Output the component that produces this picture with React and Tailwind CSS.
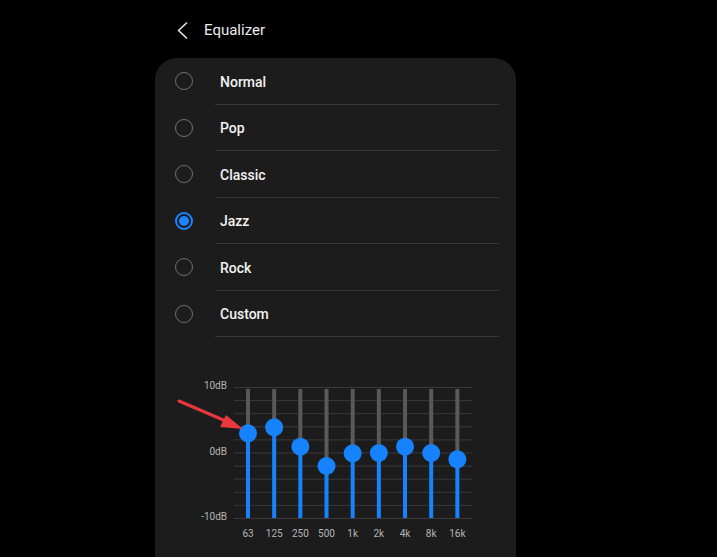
const presets = ['Normal', 'Pop', 'Classic', 'Jazz', 'Rock', 'Custom'];
const selected = 'Jazz';

// knob position as y offset inside the chart svg
const bands = [
  { label: '63', y: 53.3 },
  { label: '125', y: 47.3 },
  { label: '250', y: 66.7 },
  { label: '500', y: 86 },
  { label: '1k', y: 73.3 },
  { label: '2k', y: 73 },
  { label: '4k', y: 66.7 },
  { label: '8k', y: 73 },
  { label: '16k', y: 79.3 },
];

const font = { fontFamily: 'Roboto, "Noto Sans", sans-serif' };

const Radio = ({ on }) =>
  on ? (
    <div className="w-[18px] h-[18px] rounded-full border-2 border-[#1a84ff] flex items-center justify-center">
      <div className="w-[10px] h-[10px] rounded-full bg-[#1a84ff]" />
    </div>
  ) : (
    <div className="w-[18px] h-[18px] rounded-full border-[1.5px] border-[#707070]" />
  );

const Chart = () => {
  const top = 7;
  const step = 13.1;
  return (
    <svg width="238" height="145" viewBox="0 0 238 145">
      {/* grid */}
      {Array.from({ length: 11 }).map((_, i) => (
        <line
          key={i}
          x1="0"
          x2="238"
          y1={top + i * step + 0.5}
          y2={top + i * step + 0.5}
          stroke="#393939"
          strokeWidth="1"
        />
      ))}
      {/* sliders */}
      {bands.map((b, i) => {
        const x = 14 + i * 26.17;
        return (
          <g key={b.label}>
            <rect x={x - 2} y="9" width="4" height={b.y - 9} fill="#595959" />
            <rect x={x - 2} y={b.y} width="4" height={138 - b.y} fill="#1683fd" />
            <circle cx={x} cy={b.y} r="9" fill="#1683fd" />
          </g>
        );
      })}
    </svg>
  );
};

const App = () => {
  return (
    <div className="relative w-[717px] h-[557px] bg-black overflow-hidden text-white" style={font}>
      {/* Header */}
      <div className="h-[58px] flex items-center pl-[177px] pt-[3px]">
        <svg width="11" height="17" viewBox="0 0 11 17" fill="none">
          <polyline points="9.5,1 1.5,8.5 9.5,16" stroke="#e6e6e6" strokeWidth="1.6" strokeLinecap="round" strokeLinejoin="round" />
        </svg>
        <span className="ml-[16px] text-[15px] text-[#ececec]">Equalizer</span>
      </div>

      {/* Card */}
      <div className="ml-[155px] w-[361px] h-[540px] bg-[#1c1c1c] rounded-[22px]">
        <div className="flex flex-col">
          {presets.map((p) => (
            <div key={p} className="flex h-[46.5px] pl-[20px]">
              <div className="w-[40px] flex items-center">
                <Radio on={p === selected} />
              </div>
              <div className="w-[284px] flex items-center pl-[5px] pt-[3px] border-b border-[#363636] text-[14px] font-medium text-[#f2f2f2]">
                {p}
              </div>
            </div>
          ))}
        </div>

        {/* Bands */}
        <div className="mt-[43px] flex">
          <div className="w-[72px] h-[143px] flex flex-col justify-between items-end text-[10px] leading-[12px] text-[#b5b5b5]">
            <span>10dB</span>
            <span>0dB</span>
            <span>-10dB</span>
          </div>
          <div className="ml-[7px] flex flex-col">
            <Chart />
            <div className="mt-[3px] flex pl-[1px] text-[10px] leading-[12px] text-[#b5b5b5]">
              {bands.map((b) => (
                <span key={b.label} className="w-[26.17px] text-center">
                  {b.label}
                </span>
              ))}
            </div>
          </div>
        </div>
      </div>

      {/* annotation arrow */}
      <svg className="absolute left-[170px] top-[390px]" width="90" height="50" viewBox="0 0 90 50">
        <line x1="9" y1="11" x2="58" y2="32" stroke="#e8383d" strokeWidth="3" strokeLinecap="round" />
        <polygon points="73,39 50,37 56,25" fill="#e8383d" />
      </svg>
    </div>
  );
};

export default App;
